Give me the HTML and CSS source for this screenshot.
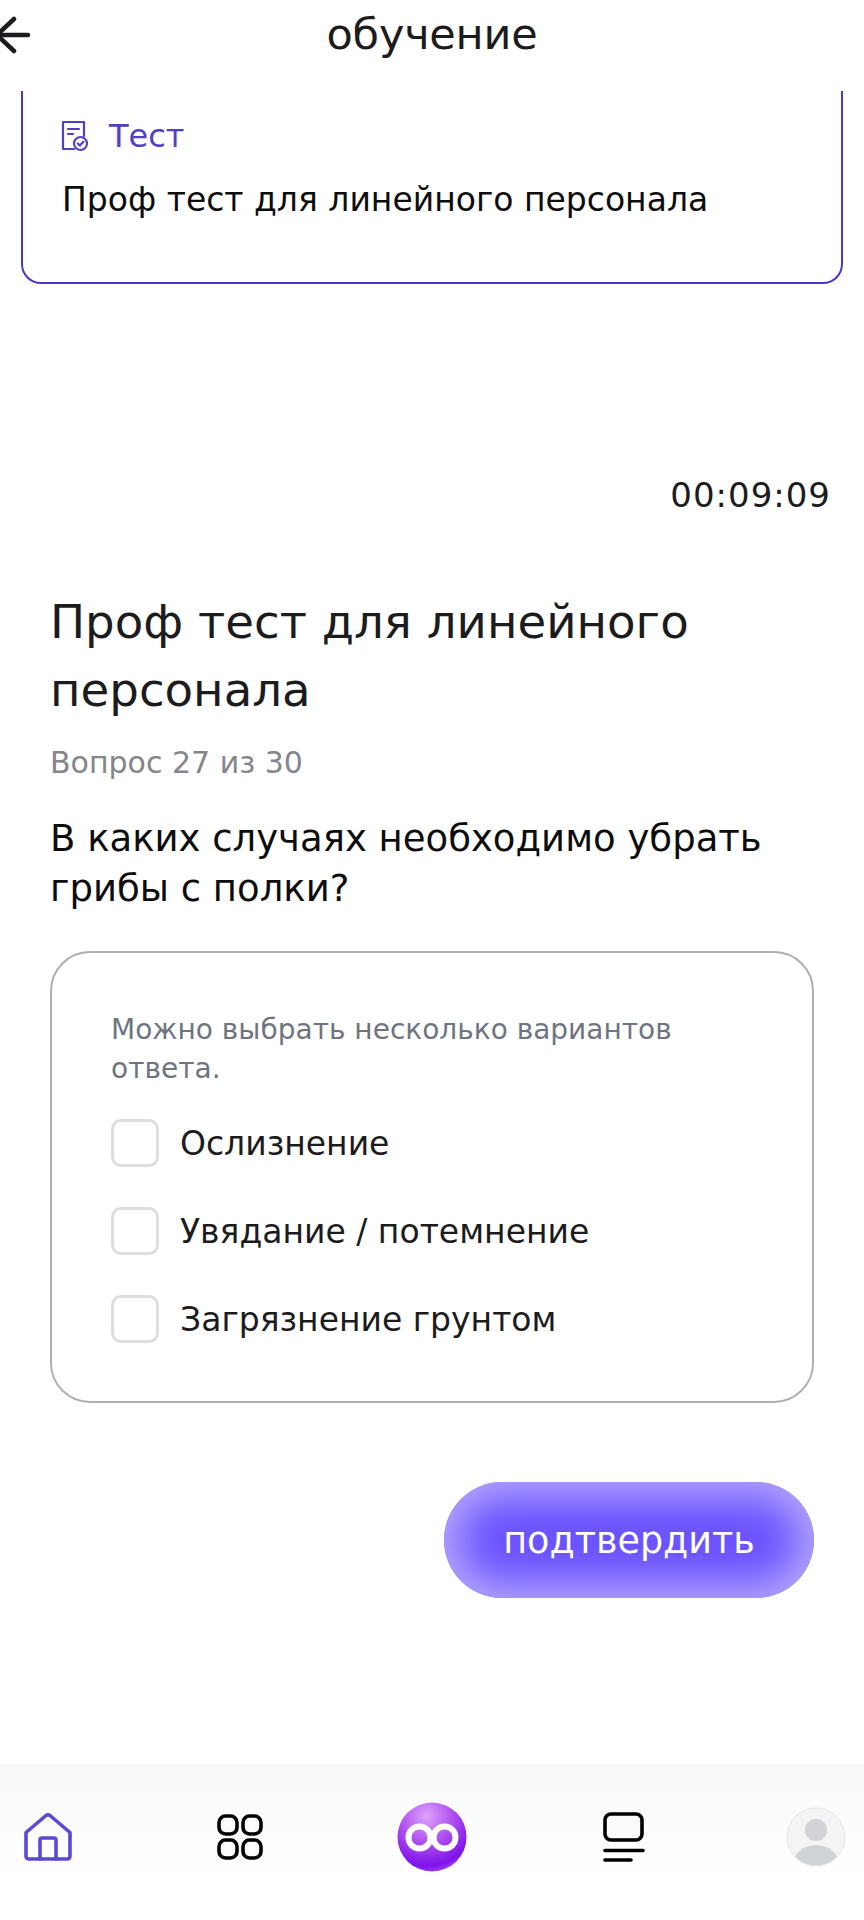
FILE: index.html
```html
<!DOCTYPE html>
<html lang="ru">
<head>
    <meta charset="utf-8">
    <title>Обучение</title>
    <link rel="stylesheet" href="styles.css">
</head>
<body>
    <div class="app">
        <header class="topbar">
            <svg class="back" width="34" height="40" viewBox="0 0 34 40" fill="none" stroke="#1c1c1e" stroke-width="4.500" stroke-linecap="round" stroke-linejoin="round">
                <path d="M28 19H-2"/>
                <path d="M14 3L-3 19L14 35"/>
            </svg>
            <h1 class="topbar-title">обучение</h1>
            <span></span>
        </header>

        <section class="lesson-card">
            <div class="lesson-type">
                <svg width="28" height="32" viewBox="0 0 28 32" fill="none" stroke="#5240c4" stroke-width="2.200" stroke-linecap="round" stroke-linejoin="round">
                    <path d="M13 29H2V2H23V16"/>
                    <path d="M7 9H18"/>
                    <path d="M7 14H12"/>
                    <circle cx="19.500" cy="23.500" r="6.500"/>
                    <path d="M16.800 23.500L18.800 25.600L22.400 21.800"/>
                </svg>
                <span>Тест</span>
            </div>
            <p class="lesson-name">Проф тест для линейного персонала</p>
        </section>

        <div class="timer">00:09:09</div>

        <main class="test">
            <h2 class="test-title">Проф тест для линейного персонала</h2>
            <p class="test-count">Вопрос 27 из 30</p>
            <p class="question">В каких случаях необходимо убрать грибы с полки?</p>

            <div class="answers">
                <p class="answers-hint">Можно выбрать несколько вариантов ответа.</p>
                <label class="answer"><span class="check"></span>Ослизнение</label>
                <label class="answer"><span class="check"></span>Увядание / потемнение</label>
                <label class="answer"><span class="check"></span>Загрязнение грунтом</label>
            </div>

            <div class="actions">
                <button class="confirm">подтвердить</button>
            </div>
        </main>

        <nav class="tabbar">
            <div class="tab">
                <svg width="50" height="52" viewBox="0 0 50 52" fill="none" stroke="#5b48d6" stroke-width="3.600" stroke-linecap="round" stroke-linejoin="round">
                    <path d="M3 21.500L23 4.500Q25 3 27 4.500L47 21.500V45Q47 48 44 48H6Q3 48 3 45Z"/>
                    <path d="M17 48V29Q17 27 19 27H31Q33 27 33 29V48"/>
                </svg>
            </div>
            <div class="tab">
                <svg width="46" height="46" viewBox="0 0 46 46" fill="none" stroke="#000" stroke-width="3.600">
                    <rect x="2" y="2" width="18" height="18" rx="6.500"/>
                    <rect x="26" y="2" width="18" height="18" rx="6.500"/>
                    <rect x="2" y="26" width="18" height="18" rx="6.500"/>
                    <rect x="26" y="26" width="18" height="18" rx="6.500"/>
                </svg>
            </div>
            <div class="tab">
                <svg width="70" height="70" viewBox="0 0 70 70" fill="none">
                    <defs>
                        <radialGradient id="orb" cx="0.42" cy="0.2" r="0.85">
                            <stop offset="0" stop-color="#dca4fa"/>
                            <stop offset="0.45" stop-color="#b050f0"/>
                            <stop offset="0.85" stop-color="#7d12ea"/>
                            <stop offset="1" stop-color="#a848f2"/>
                        </radialGradient>
                    </defs>
                    <circle cx="35" cy="35" r="34.500" fill="url(#orb)"/>
                    <circle cx="22.500" cy="35.500" r="11" stroke="#fff" stroke-width="6"/>
                    <circle cx="47.500" cy="35.500" r="11" stroke="#fff" stroke-width="6"/>
                </svg>
            </div>
            <div class="tab">
                <svg width="44" height="50" viewBox="0 0 44 50" fill="none" stroke="#000" stroke-width="3.600" stroke-linecap="round">
                    <rect x="3" y="2" width="37" height="26" rx="6"/>
                    <path d="M3 38.500H41"/>
                    <path d="M3 48H29"/>
                </svg>
            </div>
            <div class="tab">
                <svg width="60" height="60" viewBox="0 0 60 60">
                    <defs>
                        <clipPath id="round"><circle cx="30" cy="30" r="28.500"/></clipPath>
                    </defs>
                    <circle cx="30" cy="30" r="29" fill="#f4f4f5" stroke="#e6e6e8" stroke-width="1"/>
                    <g clip-path="url(#round)" fill="#d2d3d6">
                        <circle cx="30" cy="23" r="11"/>
                        <ellipse cx="30" cy="58" rx="23" ry="20"/>
                    </g>
                </svg>
            </div>
        </nav>
    </div>
</body>
</html>
```

FILE: styles.css
```css
* {
    box-sizing: border-box;
}
body {
    margin: 0;
    background: #fff;
    font-family: "DejaVu Sans", sans-serif;
    color: #1c1c1e;
}
p, h1, h2 {
    margin: 0;
    font-weight: 400;
}
.app {
    width: 864px;
    height: 1920px;
    display: flex;
    flex-direction: column;
    overflow: hidden;
}
.topbar {
    height: 91px;
    flex: none;
    display: grid;
    grid-template-columns: 1fr auto 1fr;
    align-items: center;
    padding-bottom: 24px;
}
.back {
    display: block;
    overflow: visible;
    margin-top: 4px;
}
.topbar-title {
    font-size: 43px;
    line-height: 46px;
    letter-spacing: -0.2px;
}
.lesson-card {
    height: 193px;
    flex: none;
    margin: 0 21px;
    padding: 25px 40px 0 38px;
    border: 2px solid #4c38bd;
    border-top: none;
    border-radius: 0 0 20px 20px;
}
.lesson-type {
    display: flex;
    align-items: center;
    gap: 20px;
    font-size: 32px;
    line-height: 40px;
    color: #5240c4;
}
.lesson-name {
    margin-top: 24px;
    margin-left: 1px;
    font-size: 33px;
    line-height: 40px;
    color: #0d0d0d;
}
.timer {
    margin: 191px 33px 0 0;
    text-align: right;
    font-size: 34px;
    line-height: 40px;
    letter-spacing: 1px;
}
.test {
    margin: 0 50px;
    flex: 1;
}
.test-title {
    margin-top: 73px;
    font-size: 46.7px;
    line-height: 68px;
}
.test-count {
    margin-top: 19px;
    font-size: 30px;
    line-height: 40px;
    color: #85858c;
}
.question {
    margin-top: 31px;
    font-size: 37px;
    line-height: 50px;
    color: #0d0d0d;
}
.answers {
    margin-top: 37px;
    height: 452px;
    padding: 57px 48px 0 59px;
    border: 2px solid #b0b0b4;
    border-radius: 40px;
}
.answers-hint {
    font-size: 28px;
    line-height: 39px;
    color: #6f7580;
}
.answer {
    display: flex;
    align-items: center;
    gap: 21px;
    height: 48px;
    margin-top: 40px;
    font-size: 33px;
}
.answers-hint + .answer {
    margin-top: 31px;
}
.check {
    width: 48px;
    height: 48px;
    flex: none;
    border: 3px solid #dedee0;
    border-radius: 10px;
}
.actions {
    display: flex;
    justify-content: flex-end;
    margin-top: 79px;
}
.confirm {
    width: 370px;
    height: 116px;
    border: none;
    border-radius: 58px;
    background: #6a52ff;
    box-shadow: inset 0 0 40px 14px #b5a9ff;
    color: #fff;
    font-family: inherit;
    font-size: 36.5px;
}
.tabbar {
    height: 156px;
    flex: none;
    display: flex;
    justify-content: space-between;
    align-items: center;
    padding-bottom: 10px;
    background: linear-gradient(#f9f9f9, #fff 75%);
}
.tab {
    width: 96px;
    display: flex;
    justify-content: center;
}
```
